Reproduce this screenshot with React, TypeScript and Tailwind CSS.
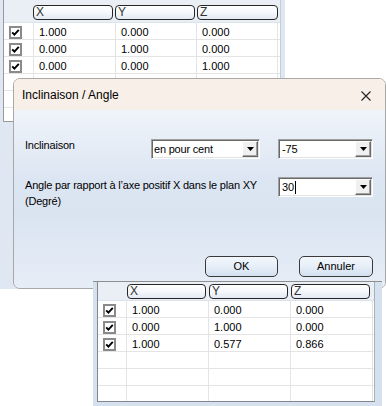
import React from "react";

const FONT = { fontFamily: '"Liberation Sans", Arial, sans-serif' };

function Check() {
  return (
    <div className="w-[13px] h-[13px] border-2 border-[#8a8a8a] bg-white flex items-center justify-center">
      <svg width="9" height="9" viewBox="0 0 9 9">
        <path d="M1.2 4.3 L3.4 6.6 L7.8 1.8" stroke="#000" strokeWidth="1.9" fill="none" />
      </svg>
    </div>
  );
}

function HeaderBox({ label, wide }: { label: string; wide?: boolean }) {
  return (
    <div
      className={
        wide
          ? "w-[81px] h-[15px] rounded-[4px] border border-[#262626] bg-[linear-gradient(180deg,#ffffff_0%,#f4f7fb_50%,#e4eaf2_100%)] text-[12px] leading-[13px] pl-[2px] text-[#333]"
          : "w-[80px] h-[15px] rounded-[4px] border border-[#262626] bg-[linear-gradient(180deg,#ffffff_0%,#f4f7fb_50%,#e4eaf2_100%)] text-[12px] leading-[13px] pl-[2px] text-[#333]"
      }
    >
      {label}
    </div>
  );
}

function HeaderBoxSm({ label }: { label: string }) {
  return (
    <div className="w-[79px] mr-[3px] h-[15px] rounded-[4px] border border-[#262626] bg-[linear-gradient(180deg,#ffffff_0%,#f4f7fb_50%,#e4eaf2_100%)] text-[12px] leading-[13px] pl-[2px] text-[#333]">
      {label}
    </div>
  );
}

type Row = [boolean, string, string, string];

function TopRow({ r }: { r: Row }) {
  return (
    <div className="flex h-[17px] border-b border-[#e4e4e4] text-[11px] leading-[19px] text-black">
      <div className="w-[30px] border-r border-[#e4e4e4] pl-[5px] pt-[3px]">{r[0] ? <Check /> : null}</div>
      <div className="w-[82px] border-r border-[#e4e4e4] pl-[5px]">{r[1]}</div>
      <div className="w-[81px] border-r border-[#e4e4e4] pl-[5px]">{r[2]}</div>
      <div className="w-[81px] border-r border-[#e4e4e4] pl-[5px]">{r[3]}</div>
    </div>
  );
}

function BottomRow({ r }: { r: Row }) {
  return (
    <div className="flex h-[17px] shrink-0 border-b border-[#e4e4e4] text-[11px] leading-[19px] text-black">
      <div className="w-[29px] border-r border-[#e4e4e4] pl-[5px] pt-[3px]">{r[0] ? <Check /> : null}</div>
      <div className="w-[82px] border-r border-[#e4e4e4] pl-[5px]">{r[1]}</div>
      <div className="w-[82px] border-r border-[#e4e4e4] pl-[5px]">{r[2]}</div>
      <div className="w-[82px] border-r border-[#e4e4e4] pl-[5px]">{r[3]}</div>
    </div>
  );
}

function DropBtn() {
  return (
    <div className="w-[16px] h-[16px] bg-[#f0f0f0] border border-t-[#ffffff] border-l-[#ffffff] border-r-[#696969] border-b-[#696969] shadow-[inset_-1px_-1px_0_#a0a0a0] flex items-center justify-center">
      <svg width="7" height="4" viewBox="0 0 7 4">
        <path d="M0 0 H7 L3.5 4 Z" fill="#000" />
      </svg>
    </div>
  );
}

function Combo({ text, wide, caret }: { text: string; wide?: boolean; caret?: boolean }) {
  return (
    <div
      className={
        wide
          ? "w-[109px] h-[20px] bg-white border border-t-[#a0a0a0] border-l-[#a0a0a0] border-r-[#ffffff] border-b-[#ffffff] shadow-[inset_1px_1px_0_#696969,inset_-1px_-1px_0_#e3e3e3] flex items-center pl-[2px] pr-[1px]"
          : "w-[95px] h-[20px] bg-white border border-t-[#a0a0a0] border-l-[#a0a0a0] border-r-[#ffffff] border-b-[#ffffff] shadow-[inset_1px_1px_0_#696969,inset_-1px_-1px_0_#e3e3e3] flex items-center pl-[3px] pr-[1px]"
      }
    >
      <div className="flex-1 flex items-center text-[11px] leading-[14px] text-black">
        <span>{text}</span>
        {caret ? <span className="w-px h-[13px] bg-black ml-[1px]" /> : null}
      </div>
      <DropBtn />
    </div>
  );
}

function Btn({ label, wide }: { label: string; wide?: boolean }) {
  return (
    <div
      className={
        wide
          ? "w-[74px] h-[21px] rounded-[5px] border border-[#3a3a3a] bg-[linear-gradient(180deg,#f3f7fc_0%,#e6eef8_50%,#d3e0f1_100%)] flex items-center justify-center text-[11px] text-black"
          : "w-[73px] h-[21px] rounded-[5px] border border-[#3a3a3a] bg-[linear-gradient(180deg,#f3f7fc_0%,#e6eef8_50%,#d3e0f1_100%)] flex items-center justify-center text-[11px] text-black"
      }
    >
      {label}
    </div>
  );
}

export default function App() {
  const top: Row[] = [
    [true, "1.000", "0.000", "0.000"],
    [true, "0.000", "1.000", "0.000"],
    [true, "0.000", "0.000", "1.000"],
    [false, "", "", ""],
    [false, "", "", ""],
  ];
  const bottom: Row[] = [
    [true, "1.000", "0.000", "0.000"],
    [true, "0.000", "1.000", "0.000"],
    [true, "1.000", "0.577", "0.866"],
    [false, "", "", ""],
    [false, "", "", ""],
    [false, "", "", ""],
  ];
  return (
    <div className="relative w-[386px] h-[406px] bg-white overflow-hidden" style={FONT}>
      {/* back window: top table */}
      <div className="absolute left-0 top-0 w-[285px] h-[289px] bg-[#dfe7f3] pl-[3px] pr-[4px]">
        <div className="h-[122px] bg-white border-l border-r border-b border-l-[#9a9a9a] border-r-[#c4cdd9] border-b-[#9a9a9a] flex flex-col overflow-hidden">
          <div className="h-[23px] shrink-0 bg-[#eaeff6] border-b border-[#dde3eb] pt-[5px] flex">
            <div className="w-[29px]" />
            <div className="mr-[2px]"><HeaderBox label="X" /></div>
            <div className="mr-[2px]"><HeaderBox label="Y" /></div>
            <HeaderBox label="Z" wide />
          </div>
          {top.map((r, i) => (
            <TopRow key={i} r={r} />
          ))}
        </div>
      </div>

      {/* dialog */}
      <div className="absolute left-[13px] top-[78px] w-[373px] h-[211px] rounded-[7px] border border-[#a8a8a8] overflow-hidden flex flex-col">
        <div className="h-[31px] shrink-0 bg-[#f8f0e8] flex items-center justify-between pl-[8px] pr-[14px]">
          <span className="text-[12px] leading-[16px] text-black">Inclinaison / Angle</span>
          <svg width="10" height="10" viewBox="0 0 10 10" className="mt-[2px]">
            <path d="M0.5 0.5 L9.5 9.5 M9.5 0.5 L0.5 9.5" stroke="#222" strokeWidth="1.1" />
          </svg>
        </div>
        <div className="flex-1 flex flex-col bg-[linear-gradient(180deg,#eff4fa_0%,#dce5f2_40%,#dae4f1_60%,#e7edf7_100%)] pl-[11px] pr-[12px] pt-[29px] pb-[11px] text-[11px] tracking-[-0.2px] text-black">
          <div className="flex items-start">
            <div className="w-[126px] mt-[-2px] leading-[16px]">Inclinaison</div>
            <Combo text="en pour cent" wide />
            <div className="ml-[18px]">
              <Combo text="-75" />
            </div>
          </div>
          <div className="flex items-start mt-[18px]">
            <div className="w-[253px] leading-[16px] pr-[8px]">
              Angle par rapport à l’axe positif X dans le plan XY (Degré)
            </div>
            <Combo text="30" caret />
          </div>
          <div className="mt-auto flex justify-end gap-[21px] tracking-normal">
            <Btn label="OK" />
            <Btn label="Annuler" wide />
          </div>
        </div>
      </div>

      {/* front window: bottom table */}
      <div className="absolute left-[93px] top-[281px] w-[289px] h-[125px] bg-[#d6e1ef] border-t border-[#8e8e8e] pl-[4px] pr-[7px] pb-[4px]">
        <div className="h-full bg-white border-l border-r border-b border-l-[#828790] border-r-[#a8b0bc] border-b-[#828790] flex flex-col overflow-hidden">
          <div className="h-[19px] shrink-0 bg-[#eaeff6] border-b border-[#dde3eb] pt-[2px] flex">
            <div className="w-[29px]" />
            <HeaderBoxSm label="X" />
            <HeaderBoxSm label="Y" />
            <HeaderBoxSm label="Z" />
          </div>
          {bottom.map((r, i) => (
            <BottomRow key={i} r={r} />
          ))}
        </div>
      </div>
    </div>
  );
}
